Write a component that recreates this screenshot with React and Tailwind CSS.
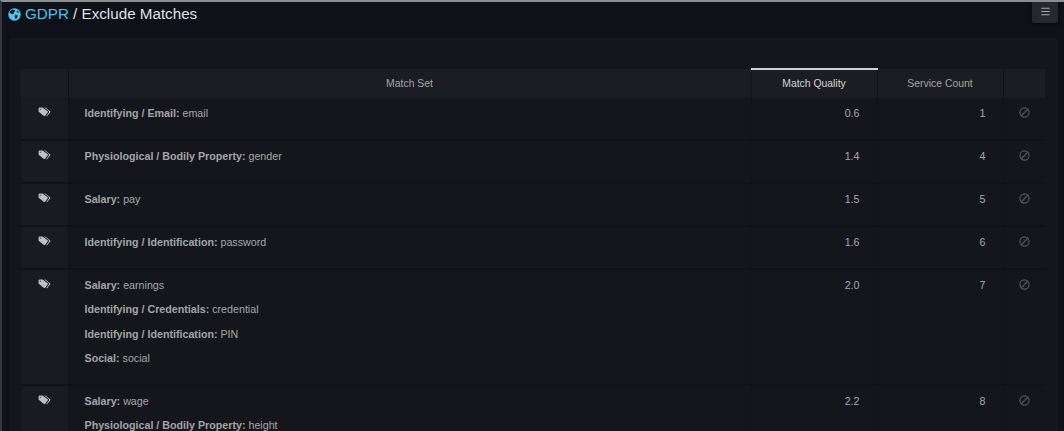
import React from 'react';
import { Menu, Ban } from 'lucide-react';

const rows = [
    { id: 1, quality: '0.6', count: '1', matches: [['Identifying / Email', 'email']] },
    { id: 2, quality: '1.4', count: '4', matches: [['Physiological / Bodily Property', 'gender']] },
    { id: 3, quality: '1.5', count: '5', matches: [['Salary', 'pay']] },
    { id: 4, quality: '1.6', count: '6', matches: [['Identifying / Identification', 'password']] },
    {
        id: 5, quality: '2.0', count: '7', matches: [
            ['Salary', 'earnings'],
            ['Identifying / Credentials', 'credential'],
            ['Identifying / Identification', 'PIN'],
            ['Social', 'social'],
        ]
    },
    {
        id: 6, quality: '2.2', count: '8', matches: [
            ['Salary', 'wage'],
            ['Physiological / Bodily Property', 'height'],
        ]
    },
];

function TagsIcon() {
    return (
        <svg width="13" height="10" viewBox="0 0 13 10" className="text-[#bfc0c2]">
            <path fill="currentColor" d="M0.6 1.4C0.6 0.9 1 0.5 1.5 0.5H4.6L9.6 4.2C10.1 4.6 10.1 5.2 9.6 5.6L7.1 8.7C6.7 9.2 6.1 9.2 5.6 8.8L1 5.1C0.7 4.9 0.6 4.6 0.6 4.3Z" />
            <path fill="currentColor" d="M6.2 0.5H7.3L12 4.2C12.5 4.6 12.5 5.2 12.1 5.6L9.3 9.1C9 9.4 8.5 9.4 8.1 9.2L10.6 6C11.1 5.3 11.1 4.4 10.4 3.8Z" />
            <circle cx="2.5" cy="2.3" r="0.7" fill="#5a5b5f" />
        </svg>
    );
}

function GlobeIcon() {
    return (
        <svg width="13" height="13" viewBox="0 0 13 13" className="shrink-0">
            <circle cx="6.5" cy="6.5" r="6.2" fill="#4fc3e8" />
            <path fill="#0e1118" d="M1.6 3.6L4.2 1.6L6.6 1.9L7.2 3.2L5.6 4.2L5.9 5.4L4.2 6.2L3.2 5.4L2 5.2ZM7 6.8L9.6 7.2L9.2 9.4L7.8 11L6.9 9.2ZM9.2 2.6L10.8 3.8L10.3 5L8.8 4.1Z" />
        </svg>
    );
}

function App() {
    return (
        <div className="h-[431px] overflow-hidden bg-[#0e1118] border-t-2 border-l-2 border-t-[#8b8d90] border-l-[#33363b] font-['Liberation_Sans',Arial,sans-serif]">
            <div className="h-[36px] flex items-start justify-between pl-[6px] pr-[6px]">
                <div className="flex items-center gap-[4px] h-[25px] text-[15.2px] text-[#dfe1e4]">
                    <GlobeIcon />
                    <span><span className="text-[#4fc3e8]">GDPR</span> / Exclude Matches</span>
                </div>
                <div className="w-[26px] h-[23px] -mt-[2px] rounded-b-[2px] bg-[#26282d] shadow-[0_1px_3px_rgba(0,0,0,0.6)] flex items-center justify-center text-[#a9abae]">
                    <Menu size={11} strokeWidth={2.5} />
                </div>
            </div>
            <div className="ml-[7px] mr-[6px] h-[500px] rounded-[3px] bg-[#14161b] pt-[30px] px-[12px]">
                <table className="w-[1024px] table-fixed border-collapse text-[10.7px] text-[#a5a7aa]">
                    <thead>
                        <tr className="h-[29px] bg-[#1c1d22] text-[10.4px] text-[#a3a5a8]">
                            <th className="w-[47px] border-r border-[#121317] font-normal"></th>
                            <th className="w-[683px] border-r border-[#121317] font-normal">Match Set</th>
                            <th className="w-[126px] border-r border-[#121317] border-t-2 border-t-[#d2d3d5] font-normal text-[#d4d5d7]">Match Quality</th>
                            <th className="w-[126px] border-r border-[#121317] font-normal">Service Count</th>
                            <th className="w-[42px] font-normal"></th>
                        </tr>
                    </thead>
                    <tbody>
                        {rows.map(r => (
                            <tr key={r.id} className="border-b-2 border-[#101216] align-top">
                                <td className="bg-[#1a1b20] border-r border-[#121317] pt-[9px]">
                                    <div className="flex justify-center"><TagsIcon /></div>
                                </td>
                                <td className="border-r border-[#121317] pl-[16px] pt-[3px] pb-[13.7px]">
                                    {r.matches.map(m => (
                                        <div key={m[0] + m[1]} className="h-[24.3px] leading-[24.3px]">
                                            <b className="text-[#a3a5a8] font-bold">{m[0]}:</b> {m[1]}
                                        </div>
                                    ))}
                                </td>
                                <td className="border-r border-[#121317] pt-[9px] pr-[17px] text-right leading-[12px]">{r.quality}</td>
                                <td className="border-r border-[#121317] pt-[9px] pr-[17px] text-right leading-[12px]">{r.count}</td>
                                <td className="pt-[9px]">
                                    <div className="flex justify-center text-[#55575b]"><Ban size={11} strokeWidth={2.5} className="-scale-x-100" /></div>
                                </td>
                            </tr>
                        ))}
                    </tbody>
                </table>
            </div>
        </div>
    );
}

export default App;
